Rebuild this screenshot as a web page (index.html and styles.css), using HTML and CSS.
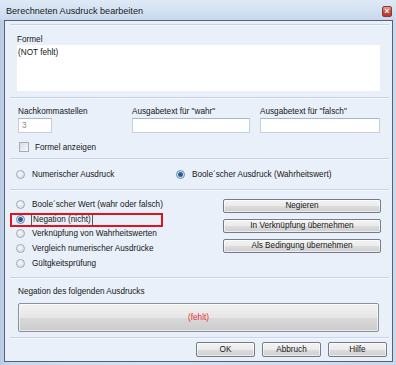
FILE: index.html
```html
<!DOCTYPE html>
<html lang="de">
<head>
    <meta charset="UTF-8">
    <title>Berechneten Ausdruck bearbeiten</title>
    <link rel="stylesheet" href="styles.css">
</head>
<body>
    <div class="window">
        <div class="titlebar">
            <span class="title">Berechneten Ausdruck bearbeiten</span>
            <span class="close">&#215;</span>
        </div>

        <div class="client">
            <div class="top-gap"></div>
            <div class="sep"></div>

            <section class="group group-formel">
                <div class="label">Formel</div>
                <div class="formula-box">(NOT fehlt)</div>
            </section>
            <div class="sep"></div>

            <section class="group group-format">
                <div class="fields">
                    <div class="field">
                        <div class="label">Nachkommastellen</div>
                        <div class="input input-small">3</div>
                    </div>
                    <div class="field">
                        <div class="label">Ausgabetext für "wahr"</div>
                        <div class="input input-wahr"></div>
                    </div>
                    <div class="field">
                        <div class="label">Ausgabetext für "falsch"</div>
                        <div class="input input-falsch"></div>
                    </div>
                </div>
                <div class="check-row">
                    <span class="checkbox"></span>
                    <span>Formel anzeigen</span>
                </div>
            </section>
            <div class="sep"></div>

            <section class="group group-type">
                <div class="radio-item">
                    <span class="radio"></span>
                    <span>Numerischer Ausdruck</span>
                </div>
                <div class="radio-item">
                    <span class="radio checked"></span>
                    <span>Boole´scher Ausdruck (Wahrheitswert)</span>
                </div>
            </section>
            <div class="sep"></div>

            <section class="group group-kind">
                <div class="radio-list">
                    <div class="radio-item">
                        <span class="radio"></span>
                        <span>Boole´scher Wert (wahr oder falsch)</span>
                    </div>
                    <div class="radio-item">
                        <span class="radio checked"></span>
                        <span class="focus">Negation (nicht)</span>
                    </div>
                    <div class="radio-item">
                        <span class="radio"></span>
                        <span>Verknüpfung von Wahrheitswerten</span>
                    </div>
                    <div class="radio-item">
                        <span class="radio"></span>
                        <span>Vergleich numerischer Ausdrücke</span>
                    </div>
                    <div class="radio-item">
                        <span class="radio"></span>
                        <span>Gültgkeitsprüfung</span>
                    </div>
                </div>
                <div class="action-list">
                    <button class="btn">Negieren</button>
                    <button class="btn">In Verknüpfung übernehmen</button>
                    <button class="btn">Als Bedingung übernehmen</button>
                </div>
                <div class="highlight"></div>
            </section>
            <div class="sep"></div>

            <section class="group group-operand">
                <div class="label">Negation des folgenden Ausdrucks</div>
                <button class="btn btn-operand">(fehlt)</button>
            </section>
            <div class="sep"></div>

            <footer class="footer">
                <button class="btn btn-footer">OK</button>
                <button class="btn btn-footer">Abbruch</button>
                <button class="btn btn-footer">Hilfe</button>
            </footer>
        </div>
    </div>
</body>
</html>
```

FILE: styles.css
```css
:root {
    --frame: #cbdaee;
    --panel: #e9f0fa;
    --line: #c3d4eb;
    --text: #161616;
    --red: #e0141c;
}

* {
    margin: 0;
    padding: 0;
    box-sizing: border-box;
}

body {
    font-family: "Liberation Sans", Arial, sans-serif;
    font-size: 8.2px;
    color: var(--text);
    background: var(--frame);
}

.window {
    width: 396px;
    height: 365px;
    padding: 0 3px 2px 4px;
    background: linear-gradient(to right, #b9cbe3, #c9d9ee 3%, #d6e3f3 40%, #c9d9ee);
}

.titlebar {
    height: 20px;
    display: flex;
    align-items: center;
    justify-content: space-between;
    background: linear-gradient(to bottom, #dfe9f6, #d2e0f1 60%, #c8d8ee);
    margin: 0 -3px 0 -4px;
    padding: 0 4px 0 6px;
}

.title {
    font-size: 9.1px;
    color: #1b1b1b;
    line-height: 20px;
    padding-top: 1px;
}

.close {
    width: 10px;
    height: 11px;
    margin-top: 2px;
    border: 1px solid #8a3a34;
    border-radius: 2px;
    background: linear-gradient(to bottom, #e49a8f, #c9483c 55%, #b8362b);
    color: white;
    font-size: 9px;
    font-weight: bold;
    line-height: 8px;
    text-align: center;
}

.client {
    height: 342px;
    border: 1px solid #56616f;
    background: var(--panel);
}

.top-gap {
    height: 3px;
}

.sep {
    height: 1px;
    margin: 0 3px 0 5px;
    background: var(--line);
    box-shadow: 0 1px 0 #f4f8fd;
}

.label {
    height: 11px;
    line-height: 11px;
}

.group-formel {
    height: 72px;
    padding: 9px 0 0 12px;
}

.formula-box {
    width: 363px;
    height: 46px;
    background: white;
    padding: 2px 0 0 1px;
    line-height: 11px;
}

.group-format {
    height: 60px;
    padding: 8px 0 0 13px;
}

.fields {
    display: grid;
    grid-template-columns: 114px 128px 120px;
}

.input {
    height: 15px;
    margin-top: 1px;
    background: white;
    border: 1px solid #c3cfdf;
    border-top-color: #a9b6c8;
    color: #8a8a8a;
    padding: 0 3px;
    line-height: 13px;
}

.input-small {
    width: 34px;
}

.input-wahr {
    width: 118px;
}

.input-falsch {
    width: 120px;
}

.check-row {
    display: flex;
    align-items: center;
    gap: 6px;
    margin: 9px 0 0 1px;
}

.checkbox {
    width: 10px;
    height: 10px;
    border: 1px solid #a3abb6;
    background: linear-gradient(135deg, #d9dde3, #f6f7f9);
}

.radio-item {
    display: flex;
    align-items: center;
    gap: 7px;
}

.radio {
    width: 9px;
    height: 9px;
    border-radius: 50%;
    border: 1px solid #a2a9b3;
    background: radial-gradient(circle at 40% 35%, #f7f8fa, #d3d7dd);
    flex-shrink: 0;
}

.radio.checked {
    border-color: #6e87a6;
    background: radial-gradient(circle, #1e4e86 0, #2f68a6 2px, #d6e1ee 3px, #eef2f7 4px);
}

.group-type {
    height: 30px;
    display: grid;
    grid-template-columns: 160px 1fr;
    align-items: center;
    padding-left: 11px;
}

.group-kind {
    height: 87px;
    position: relative;
    display: flex;
    justify-content: space-between;
    padding: 7px 11px 0 11px;
}

.radio-list .radio-item {
    height: 14.75px;
}

.focus {
    outline: 1px solid #555b63;
    padding: 1px 1px;
    line-height: 9px;
}

.action-list {
    width: 158px;
    display: flex;
    flex-direction: column;
    gap: 6px;
    padding-top: 2px;
}

.btn {
    font-family: inherit;
    font-size: 8.2px;
    color: var(--text);
    height: 14px;
    border: 1px solid #757c86;
    border-radius: 2px;
    background: linear-gradient(to bottom, #f3f3f3, #ebebeb 50%, #dddddd 51%, #cfcfcf);
    box-shadow: inset 0 0 0 1px rgba(255, 255, 255, 0.6);
    line-height: 12px;
}

.highlight {
    position: absolute;
    left: 5px;
    top: 23px;
    width: 153px;
    height: 14px;
    border: 2px solid var(--red);
}

.group-operand {
    height: 59px;
    padding: 8px 0 0 13px;
}

.btn-operand {
    display: block;
    width: 361px;
    height: 29px;
    margin-top: 6px;
    color: #ea2a33;
    border-color: #8b929b;
    background: linear-gradient(to bottom, #f2f2f2, #e6e6e6 50%, #d9d9d9 51%, #cccccc);
}

.footer {
    height: 23px;
    display: flex;
    justify-content: flex-end;
    gap: 7px;
    padding: 4px 5px 0 0;
}

.btn-footer {
    width: 59px;
    height: 15px;
}
```
